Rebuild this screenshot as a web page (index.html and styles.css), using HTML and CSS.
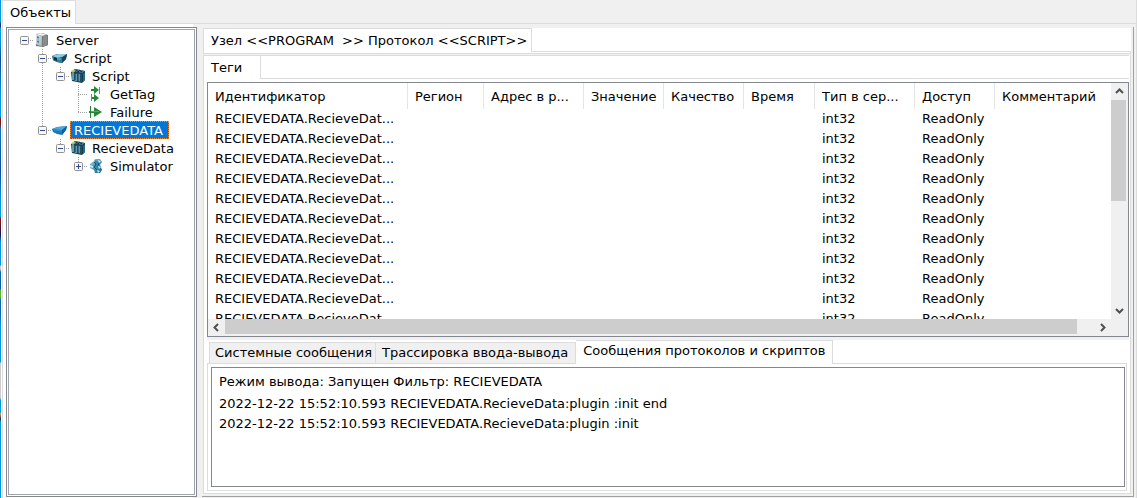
FILE: index.html
```html
<!DOCTYPE html>
<html lang="ru">
<head>
<meta charset="utf-8">
<meta name="viewport" content="width=device-width, initial-scale=1">
<title>Объекты</title>
<link rel="stylesheet" href="styles.css">
</head>
<body>
<svg class="defs" aria-hidden="true">
  <defs>
    <linearGradient id="metal" x1="0" x2="1" y1="0" y2="1"><stop offset="0" stop-color="#e4e8ea"/><stop offset="1" stop-color="#9ba3a8"/></linearGradient>
    <linearGradient id="teal" x1="0" x2="1" y1="0" y2="1"><stop offset="0" stop-color="#8ed2e8"/><stop offset="1" stop-color="#1b5a7c"/></linearGradient>
    <symbol id="server" viewBox="0 0 16 16">
      <path d="M2 2L8 1L14 3V13L9 15L2 14Z" fill="#777"/>
      <path d="M2 2L7 1L13 3L8 4Z" fill="#f1f1f1"/>
      <path d="M8 4L14 3V13L8 15Z" fill="#77797b"/>
      <path d="M10 4V14M12 4V13" stroke="#9c9fa1"/>
      <path d="M2 2L8 4V15L2 12Z" fill="url(#metal)"/>
      <path d="M3 4L5 5V11L3 10Z" fill="#3486ad"/>
      <path d="M4 6V9" stroke="#d8f4ff"/>
      <path d="M6 5V13" stroke="#c9ced1"/>
    </symbol>
    <symbol id="node" viewBox="0 0 16 16">
      <path d="M0 6L5 4L15 4L14 9L10 13L5 12L1 10Z" fill="#1c5874"/>
      <path d="M0 6L6 4H15L10 7L5 8Z" fill="#8ccbe0"/>
      <path d="M1 7L6 8L10 8V13L5 12L1 10Z" fill="#287fa0"/>
      <path d="M2 7L5 8V11L2 10Z" fill="#102d3d"/>
      <path d="M10 8L15 4L14 9L10 13Z" fill="#174456"/>
      <path d="M5 9L9 9" stroke="#5db4d0"/>
    </symbol>
    <symbol id="node-active" viewBox="0 0 16 16">
      <path d="M0 7L5 5L15 4L14 8L10 13L5 12L1 10Z" fill="#1878bd"/>
      <path d="M0 7L6 5L15 4L10 8Z" fill="#55a6d8"/>
      <path d="M10 8L15 4L14 8L10 13Z" fill="#0962a5"/>
      <path d="M2 8L10 9" stroke="#2b90d0"/>
    </symbol>
    <symbol id="rack" viewBox="0 0 16 16">
      <path d="M1 4L5 1L15 3V12L12 15L2 13Z" fill="#173e51"/>
      <path d="M3 3L5 1L15 3L12 5Z" fill="#427c91"/>
      <path d="M2 5L12 6V14L2 12Z" fill="#2e6c85"/>
      <path d="M3 5V12M6 6V13M9 6V13" stroke="#91c8d8"/>
      <path d="M5 5V12M8 6V13M11 6V14" stroke="#143445"/>
      <path d="M6 2L9 4M9 2L12 4" stroke="#102b39"/>
      <path d="M13 6L15 4V12L13 14Z" fill="#286a82"/>
      <path d="M1 3H5M3 1V5" stroke="#e4e86e"/>
    </symbol>
    <symbol id="exchange" viewBox="0 0 16 16">
      <path d="M3 4H8M4 12H8" stroke="#218331" stroke-width="2"/>
      <path d="M6 0L11 4L6 8ZM6 8L11 12L6 16Z" fill="#258735"/>
      <path d="M11.500 1V8M3.500 8V15" stroke="#5b9f60"/>
    </symbol>
    <symbol id="arrow" viewBox="0 0 16 16">
      <path d="M2.500 2V14" stroke="#218331"/>
      <path d="M1 8H9" stroke="#218331" stroke-width="2"/>
      <path d="M6 3L14 8L6 13Z" fill="#258735"/>
      <path d="M3 7.500H11" stroke="#5da957"/>
    </symbol>
    <symbol id="simulator" viewBox="0 0 16 16">
      <path d="M2 6L6 3L7 1H12L14 4L12 7L13 9L14 12L12 15H7L6 12L2 10Z" fill="url(#teal)"/>
      <path d="M7 2L11 4L10 13L7 12Z" fill="#3187ac"/>
      <path d="M2 7L5 8V10L2 9ZM10 2L13 3L11 5ZM10 8L13 9L11 11ZM9 12L12 13L10 15Z" fill="#c4edf8"/>
      <path d="M6 4L8 6L6 9L9 12M11 5L10 8" stroke="#174e6c" fill="none"/>
    </symbol>
    <symbol id="minus" viewBox="0 0 9 9"><rect x=".5" y=".5" width="8" height="8" rx="1" fill="#f8f8f8" stroke="#919191"/><path d="M2 4.500H7" stroke="#2f4a93"/></symbol>
    <symbol id="plus" viewBox="0 0 9 9"><rect x=".5" y=".5" width="8" height="8" rx="1" fill="#f8f8f8" stroke="#919191"/><path d="M2 4.500H7M4.500 2V7" stroke="#2f4a93"/></symbol>
    <symbol id="chevron" viewBox="0 0 9 9"><path d="M1 6L4.500 2.500L8 6" fill="none" stroke="#505050" stroke-width="2"/></symbol>
  </defs>
</svg>
<div class="backdrop"></div>
<div class="window">
  <div class="tabs tabs-main" role="tablist"><button class="tab active" role="tab" aria-selected="true">Объекты</button></div>
  <main class="workspace">
    <nav class="tree" aria-label="Объекты">
      <div class="tree-inner">
        <ul class="root">
          <li><div class="item"><button class="toggle" aria-label="Свернуть"><svg><use href="#minus"/></svg></button><svg class="icon"><use href="#server"/></svg><span>Server</span></div>
            <ul>
              <li><div class="item"><button class="toggle" aria-label="Свернуть"><svg><use href="#minus"/></svg></button><svg class="icon"><use href="#node"/></svg><span>Script</span></div>
                <ul>
                  <li><div class="item"><button class="toggle" aria-label="Свернуть"><svg><use href="#minus"/></svg></button><svg class="icon"><use href="#rack"/></svg><span>Script</span></div>
                    <ul>
                      <li><div class="item leaf"><svg class="icon"><use href="#exchange"/></svg><span>GetTag</span></div></li>
                      <li><div class="item leaf"><svg class="icon"><use href="#arrow"/></svg><span>Failure</span></div></li>
                    </ul></li>
                </ul></li>
              <li><div class="item selected"><button class="toggle" aria-label="Свернуть"><svg><use href="#minus"/></svg></button><svg class="icon"><use href="#node-active"/></svg><span>RECIEVEDATA</span></div>
                <ul>
                  <li><div class="item"><button class="toggle" aria-label="Свернуть"><svg><use href="#minus"/></svg></button><svg class="icon"><use href="#rack"/></svg><span>RecieveData</span></div>
                    <ul>
                      <li><div class="item"><button class="toggle" aria-label="Развернуть"><svg><use href="#plus"/></svg></button><svg class="icon"><use href="#simulator"/></svg><span>Simulator</span></div></li>
                    </ul></li>
                </ul></li>
            </ul></li>
        </ul>
      </div>
    </nav>
    <section class="details">
      <div class="tabs tabs-node" role="tablist"><button class="tab active" role="tab" aria-selected="true">Узел &lt;&lt;PROGRAM&nbsp; &gt;&gt; Протокол &lt;&lt;SCRIPT&gt;&gt;</button></div>
      <div class="divider"></div>
      <div class="node-page">
        <div class="tabs tabs-tags" role="tablist"><button class="tab active" role="tab" aria-selected="true">Теги</button></div>
        <div class="list">
          <div class="table-view">
            <table>
              <colgroup><col class="c-id"><col class="c-region"><col class="c-address"><col class="c-short"><col class="c-short"><col class="c-time"><col class="c-type"><col class="c-short"><col></colgroup>
              <thead><tr><th>Идентификатор</th><th>Регион</th><th>Адрес в р...</th><th>Значение</th><th>Качество</th><th>Время</th><th>Тип в сер...</th><th>Доступ</th><th>Комментарий</th></tr></thead>
              <tbody>
                <tr><td>RECIEVEDATA.RecieveDat...</td><td></td><td></td><td></td><td></td><td></td><td>int32</td><td>ReadOnly</td><td></td></tr>
                <tr><td>RECIEVEDATA.RecieveDat...</td><td></td><td></td><td></td><td></td><td></td><td>int32</td><td>ReadOnly</td><td></td></tr>
                <tr><td>RECIEVEDATA.RecieveDat...</td><td></td><td></td><td></td><td></td><td></td><td>int32</td><td>ReadOnly</td><td></td></tr>
                <tr><td>RECIEVEDATA.RecieveDat...</td><td></td><td></td><td></td><td></td><td></td><td>int32</td><td>ReadOnly</td><td></td></tr>
                <tr><td>RECIEVEDATA.RecieveDat...</td><td></td><td></td><td></td><td></td><td></td><td>int32</td><td>ReadOnly</td><td></td></tr>
                <tr><td>RECIEVEDATA.RecieveDat...</td><td></td><td></td><td></td><td></td><td></td><td>int32</td><td>ReadOnly</td><td></td></tr>
                <tr><td>RECIEVEDATA.RecieveDat...</td><td></td><td></td><td></td><td></td><td></td><td>int32</td><td>ReadOnly</td><td></td></tr>
                <tr><td>RECIEVEDATA.RecieveDat...</td><td></td><td></td><td></td><td></td><td></td><td>int32</td><td>ReadOnly</td><td></td></tr>
                <tr><td>RECIEVEDATA.RecieveDat...</td><td></td><td></td><td></td><td></td><td></td><td>int32</td><td>ReadOnly</td><td></td></tr>
                <tr><td>RECIEVEDATA.RecieveDat...</td><td></td><td></td><td></td><td></td><td></td><td>int32</td><td>ReadOnly</td><td></td></tr>
                <tr><td>RECIEVEDATA.RecieveDat...</td><td></td><td></td><td></td><td></td><td></td><td>int32</td><td>ReadOnly</td><td></td></tr>
              </tbody>
            </table>
          </div>
          <div class="scroll vertical"><button aria-label="Вверх"><svg><use href="#chevron"/></svg></button><div class="track"><div class="thumb"></div></div><button aria-label="Вниз"><svg class="down"><use href="#chevron"/></svg></button></div>
          <div class="scroll horizontal"><button aria-label="Влево"><svg class="left"><use href="#chevron"/></svg></button><div class="track"><div class="thumb"></div></div><button aria-label="Вправо"><svg class="right"><use href="#chevron"/></svg></button></div>
        </div>
        <div class="splitter"></div>
        <section class="messages">
          <div class="tabs tabs-messages" role="tablist">
            <button class="tab" role="tab" aria-selected="false">Системные сообщения</button>
            <button class="tab" role="tab" aria-selected="false">Трассировка ввода-вывода</button>
            <button class="tab active" role="tab" aria-selected="true">Сообщения протоколов и скриптов</button>
          </div>
          <div class="message-page">
            <div class="log">
              <p class="mode">Режим вывода: Запущен Фильтр: RECIEVEDATA</p>
              <p>2022-12-22 15:52:10.593 RECIEVEDATA.RecieveData:plugin :init end</p>
              <p>2022-12-22 15:52:10.593 RECIEVEDATA.RecieveData:plugin :init</p>
            </div>
          </div>
        </section>
      </div>
    </section>
  </main>
</div>
</body>
</html>
```
FILE: styles.css
```css
* { box-sizing: border-box; }
body {
  margin: 0;
  height: 100vh;
  display: flex;
  overflow: hidden;
  background: #fff;
  color: #000;
  font: 13px/18px Verdana, "DejaVu Sans", sans-serif;
}
button { font: inherit; color: inherit; margin: 0; padding: 0; border: 0; background: none; }
ul { list-style: none; margin: 0; padding: 0; }
p { margin: 0; }
.defs { position: absolute; width: 0; height: 0; }

.backdrop {
  flex: 0 0 1px;
  margin-right: 1px;
  background: linear-gradient(#0098dc 0 22px, #083d70 23px 27px, #0098dc 28px 40px, #064b95 60px, #0098dc 95px 117px, #701818 118px 124px, #0878b8 130px, #064b95 170px, #0098dc 200px 217px, #701818 218px 222px, #101048 235px, #0098dc 242px 265px, #ccc 266px 269px, #0868a8 272px, #0060a0 289px, #58b52c 290px 297px, #0868a8 300px 315px, #0098dc 325px 362px, #ccc 363px 398px, #0098dc 400px 412px, #d0a060 414px, #082850 419px, #0098dc 422px);
}
.window { flex: 1; min-width: 0; display: flex; flex-direction: column; border: 1px solid #dcdcdc; border-width: 0 1px 0 1px; }

.tabs { flex: none; display: flex; align-items: stretch; background: linear-gradient(#dcdcdc, #dcdcdc) bottom / 100% 1px no-repeat, #fff; }
.tab { white-space: pre; text-align: left; border-top: 1px solid #dcdcdc; border-right: 1px solid #dcdcdc; }
.tab.active { background: #fff; }
.tabs-main { height: 24px; background-color: #f0f0f0; }
.tabs-main .tab { padding: 0 4px 0 7px; }

.workspace { flex: 1; min-height: 0; display: flex; gap: 5px; padding: 3px 2px 1px 3px; background: linear-gradient(90deg, #fff 190px, #f0f0f0 190px); }
.tree { flex: 0 0 191px; border: 1px solid #828790; padding: 1px; background: #fff; }
.tree-inner { height: 100%; border: 1px solid #a0a4aa; padding: 1px 0 0 11px; }
.tree li { position: relative; }
.tree ul ul { margin-left: 18px; }
.item { height: 18px; display: flex; align-items: center; }
.toggle { flex: none; display: flex; width: 14px; background: repeating-linear-gradient(90deg, #a0a0a0 0 1px, transparent 1px 2px) 0 4px / 100% 1px no-repeat; position: relative; z-index: 1; }
.toggle svg { width: 9px; height: 9px; }
.icon { flex: none; width: 16px; height: 16px; }
.item span { height: 18px; line-height: 20px; padding: 0 3px 0 4px; margin-left: 2px; }
.leaf { padding-left: 14px; background: repeating-linear-gradient(90deg, #a0a0a0 0 1px, transparent 1px 2px) 4px 9px / 10px 1px no-repeat; }
.item.selected span { background: #0078d7; color: #fff; outline: 1px dotted #ff8728; outline-offset: -1px; padding-right: 6px; }
.tree ul ul > li::before { content: ""; position: absolute; left: 4px; top: 0; height: 9px; width: 1px; background: repeating-linear-gradient(#a0a0a0 0 1px, transparent 1px 2px); }
.tree ul ul > li:not(:last-child)::before { height: 100%; }

.details { flex: 1; min-width: 0; display: flex; flex-direction: column; padding: 1px 2px 2px 1px; background: #f0f0f0; border: 1px solid #a0a0a0; border-width: 0 1px 1px 0; }
.tabs-node { height: 24px; border-left: 1px solid #dcdcdc; }
.tabs-node .tab { padding: 0 4px 0 7px; }
.divider { flex: none; height: 2px; margin-bottom: 1px; background: #fff; border: 1px solid #dcdcdc; border-top: 0; }
.node-page { flex: 1; min-height: 0; display: flex; flex-direction: column; background: #fff; border: 1px solid #dcdcdc; border-top: 0; padding: 0 1px 2px 0; }
.tabs-tags { height: 24px; margin-bottom: 3px; border-top: 1px solid #dcdcdc; }
.tabs-tags .tab { padding: 0 18px 0 7px; border-top: 0; }

.list { flex: 254 1 0; min-height: 0; margin-left: 3px; display: grid; grid-template: minmax(0, 1fr) 17px / minmax(0, 1fr) 17px; border: 1px solid #828790; background: #f0f0f0; }
.table-view { overflow: hidden; background: #fff; }
table { width: 100%; border-collapse: collapse; table-layout: fixed; }
th, td { padding: 0 0 0 7px; height: 20px; text-align: left; font-weight: normal; white-space: nowrap; line-height: 18px; }
th { height: 26px; padding-top: 2px; background: linear-gradient(#e5e5e5, #e5e5e5) right top / 1px 100% no-repeat; }
th:last-child { background: none; }
.c-id { width: 200px; }
.c-region { width: 76px; }
.c-address { width: 100px; }
.c-short { width: 80px; }
.c-time { width: 71px; }
.c-type { width: 100px; }
.scroll { display: flex; background: #f0f0f0; }
.scroll button { flex: 0 0 17px; display: flex; align-items: center; justify-content: center; }
.scroll svg { width: 9px; height: 9px; }
.scroll .down { transform: rotate(180deg); }
.scroll .left { transform: rotate(-90deg); }
.scroll .right { transform: rotate(90deg); }
.track { flex: 1; }
.thumb { background: #cdcdcd; }
.vertical { flex-direction: column; width: 16px; }
.vertical .thumb { width: 15px; height: 50%; }
.horizontal .thumb { width: 98%; height: 15px; }
.splitter { flex: none; height: 3px; margin-left: 3px; background: #f0f0f0; }

.messages { flex: 152 1 0; min-height: 0; margin: 0 2px 0 3px; display: flex; flex-direction: column; }
.tabs-messages { height: 24px; padding-left: 2px; }
.tabs-messages .tab { margin-top: 2px; padding: 0 3px 0 5px; background: #f0f0f0; border-bottom: 1px solid #dcdcdc; }
.tabs-messages .tab:first-child { border-left: 1px solid #dcdcdc; }
.tabs-messages .tab:nth-child(2) { padding: 0 7px 0 6px; }
.tabs-messages .tab.active { margin-top: 0; padding: 0 7px 2px; background: #fff; border-bottom: 0; }
.message-page { flex: 1; min-height: 0; display: flex; padding: 3px 1px 3px 3px; border: 1px solid #dcdcdc; border-top: 0; }
.log { flex: 1; min-width: 0; border: 1px solid #828790; padding: 4px 7px; overflow: hidden; line-height: 20px; }
.mode { margin-bottom: 2px; }
```
